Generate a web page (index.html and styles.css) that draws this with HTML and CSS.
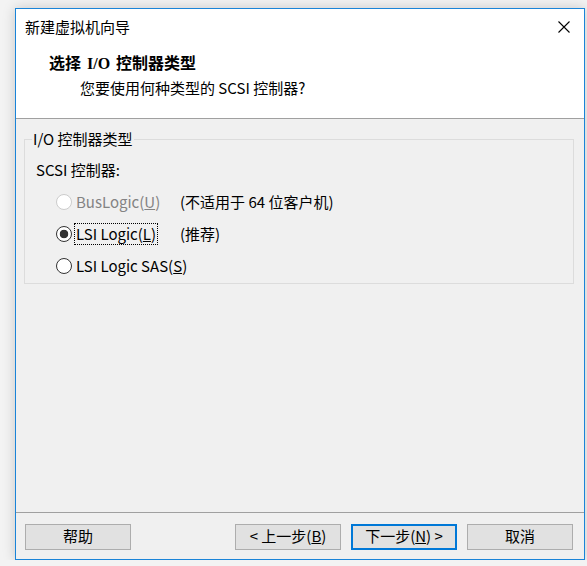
FILE: index.html
```html
<!DOCTYPE html>
<html lang="zh-CN">
<head>
  <meta charset="UTF-8">
  <meta name="viewport" content="width=device-width, initial-scale=1.0">
  <title>新建虚拟机向导</title>
  <link rel="stylesheet" href="styles.css">
</head>
<body>
  <div class="window">
    <div class="head">
      <div class="titlebar">
        <span class="title">新建虚拟机向导</span>
        <svg class="close" width="12" height="12" viewBox="0 0 12 12">
          <path d="M0.5 0.5 L11.5 11.5 M11.5 0.5 L0.5 11.5" stroke="#000" stroke-width="1.1" fill="none"/>
        </svg>
      </div>
      <div class="header">
        <h1>选择 I/O 控制器类型</h1>
        <p>您要使用何种类型的 SCSI 控制器?</p>
      </div>
    </div>

    <div class="body">
      <fieldset class="group">
        <legend>I/O 控制器类型</legend>
        <div class="label">SCSI 控制器:</div>
        <div class="options">
          <div class="option disabled">
            <span class="radio"></span>
            <span class="text">BusLogic(<u>U</u>)</span>
          </div>
          <div class="note">(不适用于 64 位客户机)</div>

          <div class="option">
            <span class="radio checked"></span>
            <span class="text focus">LSI Logic(<u>L</u>)</span>
          </div>
          <div class="note">(推荐)</div>

          <div class="option wide">
            <span class="radio"></span>
            <span class="text">LSI Logic SAS(<u>S</u>)</span>
          </div>
        </div>
      </fieldset>
    </div>

    <div class="footer">
      <button class="btn">帮助</button>
      <div class="nav">
        <button class="btn">&lt; 上一步(<u>B</u>)</button>
        <button class="btn default">下一步(<u>N</u>) &gt;</button>
        <button class="btn">取消</button>
      </div>
    </div>
  </div>
</body>
</html>
```

FILE: styles.css
```css
* {
  margin: 0;
  padding: 0;
  box-sizing: border-box;
}
body {
  background-color: #f3f3f3;
  font-family: "Noto Sans CJK SC", sans-serif;
  font-size: 15px;
  color: #000;
}
.window {
  margin: 8px 0 0 15px;
  width: 570px;
  height: 552px;
  border: 1px solid #1a84d8;
  background-color: #f0f0f0;
  box-shadow: 0 0 12px rgba(0, 0, 0, 0.18);
  display: flex;
  flex-direction: column;
}
/* 顶部白色区域 */
.head {
  background-color: #fff;
  border-bottom: 1px solid #a0a0a0;
}
.titlebar {
  height: 36px;
  padding: 0 14px 0 9px;
  display: flex;
  align-items: center;
  justify-content: space-between;
}
.title {
  line-height: 20px;
}
.header {
  padding: 7px 0 18px 33px;
}
.header h1 {
  font-family: "Liberation Serif", "Noto Sans CJK SC", serif;
  font-size: 16px;
  font-weight: bold;
  line-height: 24px;
  word-spacing: 2px;
}
.header p {
  line-height: 24px;
  padding-left: 31px;
}
/* 中间内容 */
.body {
  flex: 1;
  padding: 10px 10px 0 8px;
}
.group {
  border: 1px solid #dcdcdc;
  padding: 11px 11px 1px;
}
.group legend {
  line-height: 20px;
  padding: 0 1px;
  margin-left: -4px;
}
.label {
  line-height: 20px;
}
.options {
  margin-top: 6px;
  padding-left: 20px;
  display: grid;
  grid-template-columns: 124px auto;
  grid-auto-rows: 32px;
  align-items: center;
}
.option {
  display: flex;
  align-items: center;
  white-space: nowrap;
}
.option.wide {
  grid-column: 1 / 3;
}
.radio {
  width: 16px;
  height: 16px;
  border: 1px solid #333;
  border-radius: 50%;
  background-color: #fff;
  margin-right: 3px;
  flex-shrink: 0;
}
.radio.checked {
  background: radial-gradient(circle, #333 0, #333 4px, #fff 4.6px);
}
.option.disabled .radio {
  border-color: #cccccc;
}
.option.disabled .text {
  color: #838383;
}
.text {
  line-height: 20px;
  padding: 0 1px;
}
.focus {
  outline: 1px dotted #000;
}
.note {
  line-height: 20px;
}
/* 底部按钮 */
.footer {
  height: 47px;
  border-top: 1px solid #a0a0a0;
  padding: 11px 11px 0 9px;
  display: flex;
  justify-content: space-between;
  align-items: flex-start;
}
.nav {
  display: flex;
  gap: 10px;
}
.btn {
  width: 106px;
  height: 26px;
  padding-bottom: 3px;
  border: 1px solid #adadad;
  background-color: #e1e1e1;
  font-family: "Noto Sans CJK SC", sans-serif;
  font-size: 15px;
  line-height: 20px;
  color: #000;
}
.btn.default {
  border: 2px solid #0078d7;
}
```
